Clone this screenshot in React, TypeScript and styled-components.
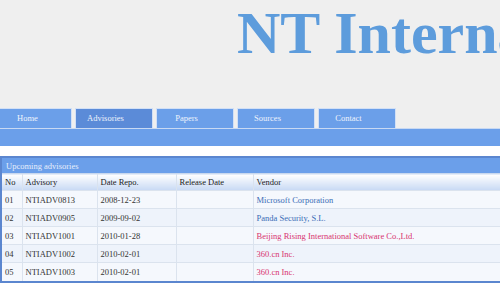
import { styled, createGlobalStyle } from 'styled-components'

const tabs = ['Home', 'Advisories', 'Papers', 'Sources', 'Contact']

const rows = [
  { no: '01', id: 'NTIADV0813', date: '2008-12-23', vendor: 'Microsoft Corporation', hot: false },
  { no: '02', id: 'NTIADV0905', date: '2009-09-02', vendor: 'Panda Security, S.L.', hot: false },
  { no: '03', id: 'NTIADV1001', date: '2010-01-28', vendor: 'Beijing Rising International Software Co.,Ltd.', hot: true },
  { no: '04', id: 'NTIADV1002', date: '2010-02-01', vendor: '360.cn Inc.', hot: true },
  { no: '05', id: 'NTIADV1003', date: '2010-02-01', vendor: '360.cn Inc.', hot: true },
]

export default function App() {
  return (
    <Page>
      <GlobalStyle />
      <Header>
        <Title>NT Internal Security</Title>
      </Header>
      <Nav>
        {tabs.map((t, i) => (
          <Tab key={t} $active={t === 'Advisories'} $first={i === 0}>
            {t}
          </Tab>
        ))}
      </Nav>
      <Bar />
      <Content>
        <Box>
          <Caption>Upcoming advisories</Caption>
          <Table>
            <colgroup>
              <col style={{ width: 20 }} />
              <col style={{ width: 75 }} />
              <col style={{ width: 79 }} />
              <col style={{ width: 77 }} />
              <col />
            </colgroup>
            <thead>
              <tr>
                <Th>No</Th>
                <Th>Advisory</Th>
                <Th>Date Repo.</Th>
                <Th>Release Date</Th>
                <Th>Vendor</Th>
              </tr>
            </thead>
            <tbody>
              {rows.map((r, i) => (
                <Row key={r.no} $odd={i % 2 === 0}>
                  <Td>{r.no}</Td>
                  <Td>{r.id}</Td>
                  <Td>{r.date}</Td>
                  <Td></Td>
                  <Td>
                    <VendorLink $hot={r.hot}>{r.vendor}</VendorLink>
                  </Td>
                </Row>
              ))}
            </tbody>
          </Table>
        </Box>
      </Content>
    </Page>
  )
}

const GlobalStyle = createGlobalStyle`
  html, body {
    margin: 0;
    padding: 0;
    background: #ffffff;
    overflow: hidden;
  }
  * {
    box-sizing: border-box;
  }
`

const Page = styled.div`
  width: 500px;
  height: 286px;
  overflow: hidden;
  font-family: 'Liberation Serif', 'Times New Roman', serif;
`

const Header = styled.header`
  height: 108px;
  background: #efefef;
  padding: 3px 0 0 237px;
  overflow: hidden;
`

const Title = styled.h1`
  margin: 0;
  font-family: 'Liberation Serif', 'Times New Roman', serif;
  font-weight: bold;
  font-size: 60px;
  line-height: 60px;
  color: #5d9cdc;
  white-space: nowrap;
`

const Nav = styled.nav`
  display: flex;
  gap: 3px;
  height: 20px;
  background: #efefef;
`

const Tab = styled.div<{ $active?: boolean; $first?: boolean }>`
  width: ${(p) => (p.$first ? '72px' : '78px')};
  height: 20px;
  padding-right: ${(p) => (p.$first ? '16px' : '17px')};
  background: ${(p) => (p.$active ? '#5b8bd8' : '#6b9fe9')};
  border: 1px solid #d2e0f6;
  border-bottom: none;
  ${(p) => (p.$first ? 'border-left: none;' : '')}
  color: #eef3fc;
  font-size: 8.5px;
  line-height: 18px;
  text-align: center;
  white-space: nowrap;
`

const Bar = styled.div`
  height: 18px;
  background: #6b9fea;
  border-top: 1px solid #c8d9f3;
`

const Content = styled.div`
  padding-top: 10px;
`

const Box = styled.div`
  width: 512px;
  border: 2px solid #5b86cf;
`

const Caption = styled.div`
  height: 15px;
  background: #6b9fea;
  color: #e6eefb;
  font-size: 8.5px;
  line-height: 16px;
  padding-left: 4px;
  white-space: nowrap;
`

const Table = styled.table`
  width: 100%;
  border-collapse: collapse;
  table-layout: fixed;
  font-size: 8.5px;
  color: #333333;
`

const Th = styled.th`
  height: 17px;
  padding: 0 0 0 3px;
  text-align: left;
  font-weight: normal;
  color: #222222;
  background: linear-gradient(#ffffff, #c7d9f4);
  border-left: 1px solid #d9e2ee;
  border-top: 1px solid #c9d8ee;
  white-space: nowrap;
  &:first-child {
    border-left: none;
  }
`

const Row = styled.tr<{ $odd?: boolean }>`
  background: ${(p) => (p.$odd ? '#f5f8fd' : '#eef3fb')};
`

const Td = styled.td`
  height: 18px;
  padding: 0 0 0 3px;
  border-left: 1px solid #dbe3ee;
  border-top: 1px solid #dbe3ee;
  white-space: nowrap;
  overflow: hidden;
  &:first-child {
    border-left: none;
  }
`

const VendorLink = styled.span<{ $hot?: boolean }>`
  color: ${(p) => (p.$hot ? '#d8336f' : '#3a6cb6')};
`
